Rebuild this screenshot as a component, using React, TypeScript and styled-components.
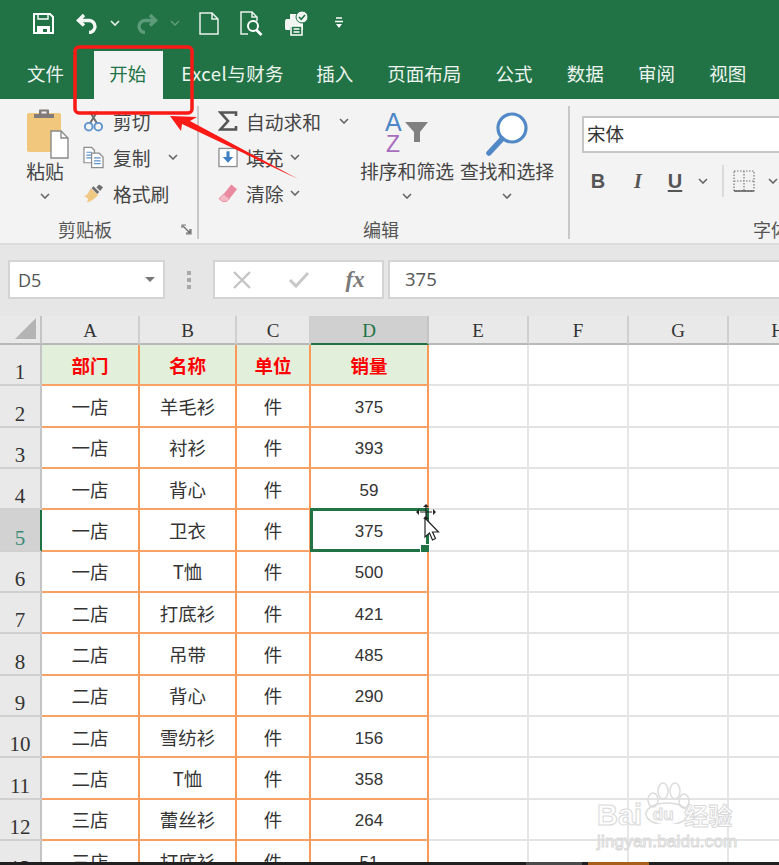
import React from "react";
import styled, { createGlobalStyle } from "styled-components";

const GlobalStyle = createGlobalStyle`
  html, body {
    margin: 0;
    padding: 0;
    background: #fff;
  }
  * {
    box-sizing: border-box;
  }
`;

const CJK = `"Noto Sans CJK SC", "Noto Sans", sans-serif`;

const Page = styled.div`
  position: relative;
  width: 779px;
  height: 865px;
  overflow: hidden;
  display: flex;
  flex-direction: column;
  font-family: ${CJK};
  color: #444;
`;

const TitleBar = styled.div`
  height: 50px;
  flex: none;
  background: #217346;
  display: flex;
  align-items: center;
  padding: 0 0 4px 33px;
`;

const QatItem = styled.div<{ $ml?: number }>`
  display: flex;
  margin-left: ${(p) => p.$ml ?? 0}px;
`;

const TabBar = styled.nav`
  height: 49px;
  flex: none;
  background: #217346;
  display: flex;
  padding-left: 10px;
`;

const Tab = styled.div<{ $active?: boolean; $wide?: boolean }>`
  height: ${(p) => (p.$active ? "48px" : "49px")};
  margin: ${(p) => (p.$active ? "1px 1px 0 13px" : "0")};
  padding: ${(p) =>
    p.$active ? "0 17px 4px 15px" : p.$wide ? "0 15px 3px 17.1px" : "0 17.1px 3px"};
  background: ${(p) => (p.$active ? "#f3f3f3" : "transparent")};
  color: ${(p) => (p.$active ? "#217346" : "#eef5f0")};
  font-size: 18.5px;
  letter-spacing: ${(p) => (p.$wide ? "0.45px" : "0")};
  line-height: 1;
  white-space: nowrap;
  display: flex;
  align-items: center;
`;

const Ribbon = styled.div`
  height: 146px;
  flex: none;
  background: #f3f3f3;
  border-bottom: 2px solid #dcdcdc;
  padding: 7px 0 4px;
  display: flex;
  overflow: hidden;
`;

const Group = styled.section<{ $w: number; $pl: number; $last?: boolean }>`
  width: ${(p) => p.$w}px;
  flex: none;
  padding-left: ${(p) => p.$pl}px;
  border-right: ${(p) => (p.$last ? "none" : "2px solid #c8c8c8")};
  display: flex;
  flex-direction: column;
`;

const GroupBody = styled.div`
  flex: 1;
  display: flex;
  min-height: 0;
`;

const GroupLabel = styled.div<{ $ml: number }>`
  position: relative;
  height: 18px;
  margin: 0 0 1px ${(p) => p.$ml}px;
  line-height: 18px;
  font-size: 18px;
  color: #555;
  white-space: nowrap;
`;

const Launcher = styled.div`
  position: absolute;
  left: 123px;
  top: 4px;
  display: flex;
`;

const BigButton = styled.div<{ $w: number; $ml?: number }>`
  width: ${(p) => p.$w}px;
  margin-left: ${(p) => p.$ml ?? 0}px;
  flex: none;
  display: flex;
  flex-direction: column;
  align-items: center;
`;

const BigIcon = styled.div<{ $shift?: number }>`
  height: 55px;
  margin-left: ${(p) => p.$shift ?? 0}px;
  display: flex;
  align-items: center;
  justify-content: center;
`;

const BigLabel = styled.div`
  height: 20px;
  line-height: 20px;
  font-size: 18.8px;
  white-space: nowrap;
`;

const BigChevron = styled.div`
  height: 29px;
  display: flex;
  align-items: center;
`;

const SmallColumn = styled.div<{ $w: number; $ml?: number }>`
  width: ${(p) => p.$w}px;
  margin: -3px 0 0 ${(p) => p.$ml ?? 0}px;
  flex: none;
`;

const SmallRow = styled.div`
  height: 36px;
  display: flex;
  align-items: center;
  font-size: 18.8px;
  white-space: nowrap;
`;

const SmallIcon = styled.div<{ $w: number; $gap?: number }>`
  width: ${(p) => p.$w}px;
  flex: none;
  display: flex;
  justify-content: center;
  margin-right: ${(p) => p.$gap ?? 9}px;
`;

const RowChevron = styled.div<{ $ml: number }>`
  margin-left: ${(p) => p.$ml}px;
  display: flex;
`;

const FontColumn = styled.div`
  flex: none;
  width: 300px;
`;

const FontInput = styled.div`
  height: 37px;
  margin-top: 10px;
  border: 2px solid #c6c6c6;
  background: #fff;
  padding-left: 3px;
  font-size: 18.5px;
  line-height: 31px;
  color: #333;
`;

const FontTools = styled.div`
  margin-top: 13px;
  height: 30px;
  display: flex;
  align-items: center;
`;

const ToolButton = styled.div<{ $w: number; $font?: string; $italic?: boolean; $underline?: boolean }>`
  width: ${(p) => p.$w}px;
  flex: none;
  display: flex;
  justify-content: center;
  font-family: ${(p) => p.$font ?? `"Liberation Sans", sans-serif`};
  font-weight: 700;
  font-size: 20px;
  line-height: 24px;
  color: #555;
  font-style: ${(p) => (p.$italic ? "italic" : "normal")};
  text-decoration: ${(p) => (p.$underline ? "underline" : "none")};
  text-underline-offset: 2px;
`;

const ToolDivider = styled.div`
  width: 2px;
  height: 32px;
  margin-left: 4px;
  flex: none;
  background: #dadada;
`;

const FormulaBar = styled.div`
  height: 71px;
  flex: none;
  background: #e6e6e6;
  padding: 15px 0 0 8px;
  display: flex;
  align-items: flex-start;
`;

const NameBox = styled.div`
  width: 157px;
  height: 39px;
  flex: none;
  background: #fff;
  border: 2px solid #d4d4d4;
  padding: 0 8px;
  display: flex;
  align-items: center;
  justify-content: space-between;
  font-family: "Open Sans", sans-serif;
  font-size: 18px;
  color: #555;
`;

const Caret = styled.div`
  width: 0;
  height: 0;
  border-left: 5px solid transparent;
  border-right: 5px solid transparent;
  border-top: 5px solid #777;
`;

const Grip = styled.div`
  width: 48px;
  height: 39px;
  flex: none;
  display: flex;
  flex-direction: column;
  align-items: center;
  justify-content: center;
  gap: 3px;
`;

const GripDot = styled.span`
  width: 4px;
  height: 4px;
  background: #a8a8a8;
`;

const FxBox = styled.div`
  width: 171px;
  height: 39px;
  flex: none;
  background: #fff;
  border: 2px solid #d4d4d4;
  display: flex;
  align-items: center;
`;

const FxSlot = styled.div<{ $w: number }>`
  width: ${(p) => p.$w}px;
  flex: none;
  display: flex;
  justify-content: center;
`;

const FxLabel = styled.span`
  font-family: "Liberation Serif", serif;
  font-style: italic;
  font-weight: 700;
  font-size: 23px;
  line-height: 30px;
  color: #7a7a7a;
`;

const ValueBox = styled.div`
  flex: 1;
  height: 39px;
  margin: 0 -4px 0 4px;
  background: #fff;
  border: 2px solid #d4d4d4;
  padding-left: 15px;
  font-family: "Open Sans", sans-serif;
  font-size: 18.5px;
  line-height: 34px;
  color: #555;
`;

const Sheet = styled.div`
  flex: 1;
  min-height: 0;
  overflow: hidden;
  display: grid;
  grid-template-columns: 42px 98px 97px 74px 118px 100px 100px 100px 100px;
  grid-template-rows: 29px;
  grid-auto-rows: 41.33px;
  background: #fff;
`;

const Corner = styled.div`
  background: #e9e9e9;
  border-right: 2px solid #c4c4c4;
  border-bottom: 2px solid #b8b8b8;
  display: flex;
  align-items: flex-end;
  justify-content: flex-end;
  padding: 0 4px 4px 0;
`;

const ColHead = styled.div<{ $selected?: boolean }>`
  background: ${(p) => (p.$selected ? "#d0d0d0" : "#e9e9e9")};
  border-right: 2px solid ${(p) => (p.$selected ? "#c4c4c4" : "#cfcfcf")};
  border-bottom: 2px solid ${(p) => (p.$selected ? "#217346" : "#b8b8b8")};
  color: ${(p) => (p.$selected ? "#217346" : "#333")};
  font-family: "Liberation Serif", serif;
  font-size: 19px;
  line-height: 29px;
  text-align: center;
`;

const RowHead = styled.div<{ $selected?: boolean }>`
  background: ${(p) => (p.$selected ? "#d2d2d2" : "#e9e9e9")};
  border-right: 2px solid ${(p) => (p.$selected ? "#217346" : "#c4c4c4")};
  border-bottom: 2px solid #d0d0d0;
  color: ${(p) => (p.$selected ? "#3d8a78" : "#333")};
  font-family: "Liberation Serif", serif;
  font-size: 21px;
  line-height: 24px;
  display: flex;
  align-items: flex-end;
  justify-content: center;
`;

const Cell = styled.div<{ $head?: boolean }>`
  position: relative;
  background: ${(p) => (p.$head ? "#e2efda" : "#fff")};
  border-right: 2px solid #f79a5a;
  border-bottom: 2px solid #f8a268;
  color: ${(p) => (p.$head ? "#ff0000" : "#333")};
  font-weight: ${(p) => (p.$head ? 700 : 400)};
  font-size: 18.5px;
  display: flex;
  align-items: center;
  justify-content: center;
  white-space: nowrap;
`;

const NumberText = styled.span`
  margin-top: 4px;
  font-family: "Liberation Sans", sans-serif;
  font-size: 17px;
`;

const EmptyCell = styled.div`
  border-right: 2px solid #e6e6e6;
  border-bottom: 2px solid #e3e3e3;
`;

const SelectionBox = styled.div`
  position: absolute;
  inset: -2px -2px -2px -1px;
  border: 3px solid #217346;
`;

const FillHandle = styled.div`
  position: absolute;
  right: -3px;
  bottom: -4px;
  width: 8px;
  height: 8px;
  background: #217346;
  border: 1px solid #fff;
  box-sizing: content-box;
`;

const MoveCursor = styled.div`
  position: absolute;
  left: 103px;
  top: -6px;
  display: flex;
  z-index: 2;
`;

const StatusStrip = styled.div`
  height: 3px;
  flex: none;
  background: #211f1f;
  display: flex;
`;

const StatusSegment = styled.div<{ $w: number; $ml: number; $color: string }>`
  width: ${(p) => p.$w}px;
  margin-left: ${(p) => p.$ml}px;
  background: ${(p) => p.$color};
`;

const Annotation = styled.svg`
  position: absolute;
  left: 0;
  top: 0;
  pointer-events: none;
`;

const Watermark = styled.div`
  position: absolute;
  left: 597px;
  top: 782px;
  width: 142px;
  height: 68px;
  font-family: "Liberation Sans", sans-serif;
  color: rgba(255, 255, 255, 0.85);
  -webkit-text-stroke: 1px #d9d9d9;
`;

const WatermarkPaw = styled.svg`
  position: absolute;
  left: 46px;
  top: 0;
`;

const WatermarkBrand = styled.div`
  position: absolute;
  left: 0;
  top: 17px;
  width: 100%;
  display: flex;
  align-items: center;
  font-size: 29px;
  font-weight: 700;
  line-height: 32px;
`;

const WatermarkDu = styled.span`
  width: 42px;
  text-align: center;
  font-size: 17px;
`;

const WatermarkCn = styled.span`
  font-family: ${CJK};
  font-size: 24px;
`;

const WatermarkUrl = styled.div`
  position: absolute;
  left: 0;
  top: 50px;
  font-size: 17px;
  line-height: 20px;
  letter-spacing: 0.2px;
  white-space: nowrap;
`;

const Chevron = ({ color = "#666", size = 10 }: { color?: string; size?: number }) => (
  <svg width={size} height={6} viewBox="0 0 10 6">
    <path d="M1 1l4 4 4-4" fill="none" stroke={color} strokeWidth="1.6" />
  </svg>
);

const SaveIcon = () => (
  <svg width="21" height="21" viewBox="0 0 21 21">
    <path d="M1 1h16l3 3v16H1z" fill="none" stroke="#fff" strokeWidth="2" />
    <path d="M4 13h13v7h-3v-4h-4v4H4z" fill="#fff" />
    <path d="M5 1v5h10V1" fill="none" stroke="#fff" strokeWidth="1.4" />
  </svg>
);

const UndoIcon = ({ color }: { color: string }) => (
  <svg width="22" height="21" viewBox="0 0 22 21">
    <path
      d="M8 2L2.5 7.5 8 12.5M3 7.5h10a6 6 0 0 1 6 6v0a6 6 0 0 1-6 6"
      fill="none"
      stroke={color}
      strokeWidth="3.4"
    />
  </svg>
);

const NewDocIcon = () => (
  <svg width="20" height="23" viewBox="0 0 20 23">
    <path d="M1 1h12l6 6v15H1z M13 1v6h6" fill="none" stroke="#e8f1ec" strokeWidth="1.5" />
  </svg>
);

const PreviewIcon = () => (
  <svg width="23" height="25" viewBox="0 0 23 25">
    <path d="M8 23H1V1h11l5 5v4 M12 1v5h5" fill="none" stroke="#e8f1ec" strokeWidth="1.5" />
    <circle cx="13" cy="15" r="5" fill="none" stroke="#fff" strokeWidth="2" />
    <path d="M16.5 19l5 5" stroke="#fff" strokeWidth="2.6" />
  </svg>
);

const PrinterIcon = () => (
  <svg width="25" height="25" viewBox="0 0 25 25">
    <path d="M2 8h4V3h8v6h3l2 3v7h-5v-3H6v3H2a2 2 0 0 1-1-2v-7z" fill="#f1f6f3" />
    <rect x="7" y="15" width="11" height="9" fill="#217346" stroke="#fff" strokeWidth="1.5" />
    <path d="M9.5 18h6M9.5 21h6" stroke="#fff" strokeWidth="1.3" />
    <circle cx="18" cy="6" r="6" fill="#f1f6f3" stroke="#217346" />
    <path d="M15 6l2.2 2.3L21 4" fill="none" stroke="#217346" strokeWidth="1.6" />
  </svg>
);

const MoreIcon = () => (
  <svg width="10" height="12" viewBox="0 0 10 12">
    <path d="M2 1h6M1 4.5h8" stroke="#fff" strokeWidth="1.5" />
    <path d="M2 7h6l-3 4z" fill="#fff" />
  </svg>
);

const PasteIcon = () => (
  <svg width="44" height="51" viewBox="0 0 44 51">
    <rect x="1" y="5" width="34" height="39" rx="2" fill="#f0c77c" />
    <path d="M8 10V6h5V2.5a1 1 0 0 1 1-1h8a1 1 0 0 1 1 1V6h5v4z" fill="#807b78" />
    <rect x="15.5" y="3.5" width="5" height="2" fill="#f3f3f3" />
    <path d="M25 23h10l7 7v20H25z" fill="#fff" stroke="#8a8a8a" strokeWidth="1.4" />
    <path d="M35 23v7h7" fill="none" stroke="#8a8a8a" strokeWidth="1.4" />
  </svg>
);

const CutIcon = () => (
  <svg width="22" height="22" viewBox="0 0 22 22">
    <path d="M15 1L7 14M7 1l8 13" stroke="#6b6b6b" strokeWidth="2" />
    <circle cx="6" cy="17" r="4" fill="none" stroke="#5b93cd" strokeWidth="2" />
    <circle cx="16" cy="17" r="4" fill="none" stroke="#5b93cd" strokeWidth="2" />
  </svg>
);

const CopyIcon = () => (
  <svg width="22" height="23" viewBox="0 0 22 23">
    <path d="M1 1h8l3 3v13H1z" fill="#fff" stroke="#8c8c8c" strokeWidth="1.3" />
    <path d="M3.5 6h6M3.5 9h6M3.5 12h6" stroke="#5b93cd" strokeWidth="1.3" />
    <path d="M9 7h8l4 4v11H9z" fill="#fff" stroke="#8c8c8c" strokeWidth="1.3" />
    <path d="M11.5 12h7M11.5 15h7M11.5 18h7" stroke="#5b93cd" strokeWidth="1.3" />
  </svg>
);

const BrushIcon = () => (
  <svg width="22" height="20" viewBox="0 0 22 20">
    <path d="M8 5l8 7-3 3c-3 3-6 4-9 5 1-2 2-4 0-5-1-1-2-1-4-1 4-1 6-4 8-9z" fill="#efc983" />
    <path d="M9 5l6 6 2-2-6-6z" fill="#6f6f6f" />
    <path d="M14 4l3-3 4 3-3 4z" fill="#6f6f6f" />
  </svg>
);

const SigmaIcon = () => (
  <svg width="20" height="20" viewBox="0 0 20 20">
    <path d="M18 5V1.5H2.5L10 10l-7.5 8.5H18V15" fill="none" stroke="#555" strokeWidth="2.6" />
  </svg>
);

const FillIcon = () => (
  <svg width="21" height="21" viewBox="0 0 21 21">
    <rect x="1" y="1" width="19" height="19" fill="#fff" stroke="#8f8f8f" strokeWidth="1.4" />
    <path d="M10.5 4v8" stroke="#3f7fc4" strokeWidth="3.2" />
    <path d="M5 10h11l-5.500 6z" fill="#3f7fc4" />
  </svg>
);

const EraserIcon = () => (
  <svg width="21" height="20" viewBox="0 0 21 20">
    <path d="M14 1l6 5-8 10-6-5z" fill="#e98aa0" />
    <path d="M6 11l6 5-3 3H5l-4-3z" fill="#f3b9c5" stroke="#e98aa0" />
  </svg>
);

const SortIcon = () => (
  <svg width="44" height="41" viewBox="0 0 44 41">
    <text x="0" y="18" fontFamily="Liberation Sans" fontSize="25" fill="#4a86c8">A</text>
    <text x="1" y="39" fontFamily="Liberation Sans" fontSize="23" fill="#a86cbd">Z</text>
    <path d="M20 9h23l-8 10v10h-6V19z" fill="#808080" />
  </svg>
);

const FindIcon = () => (
  <svg width="44" height="46" viewBox="0 0 44 46">
    <circle cx="27" cy="17" r="14" fill="#fff" stroke="#5189c6" strokeWidth="3.2" />
    <path d="M17 28L4 42" stroke="#5189c6" strokeWidth="5.500" strokeLinecap="round" />
  </svg>
);

const BordersIcon = () => (
  <svg width="22" height="22" viewBox="0 0 22 22">
    <path d="M1 1h20v20H1zM11 1v20M1 11h20" fill="none" stroke="#777" strokeWidth="1.2" strokeDasharray="1.5 1.5" />
    <path d="M1 21h20" stroke="#555" strokeWidth="1.4" />
  </svg>
);

const LauncherIcon = () => (
  <svg width="11" height="11" viewBox="0 0 11 11">
    <path d="M10 5V10H5M1 4V1h4" fill="none" stroke="#777" strokeWidth="1.200" />
    <path d="M2 2l7 7M9 5v4H5" fill="none" stroke="#666" strokeWidth="1.200" />
  </svg>
);

const CancelIcon = () => (
  <svg width="20" height="20" viewBox="0 0 20 20">
    <path d="M2 2l16 16M18 2L2 18" stroke="#c4c4c4" strokeWidth="2.4" />
  </svg>
);

const EnterIcon = () => (
  <svg width="22" height="18" viewBox="0 0 22 18">
    <path d="M2 9l6 6L20 2" fill="none" stroke="#c8c8c8" strokeWidth="3" />
  </svg>
);

const SelectAllIcon = () => (
  <svg width="21" height="21" viewBox="0 0 21 21">
    <path d="M21 0v21H0z" fill="#b4b4b4" />
  </svg>
);

const MoveCursorIcon = () => (
  <svg width="28" height="38" viewBox="0 0 28 38">
    <path d="M12 8V2M12 8v6M6 8h12" stroke="#222" strokeWidth="1.200" />
    <path d="M12 0l3 3H9zM2 8l3-3v6zM22 8l-3-3v6z M12 12l3 3H9z" fill="#222" />
    <path d="M11 14v19l4.500-4 3 7 3-1.500-3-6.500h6z" fill="#fff" stroke="#222" strokeWidth="1.200" />
  </svg>
);

const tabs = ["插入", "页面布局", "公式", "数据", "审阅", "视图"];
const columns = ["A", "B", "C", "D", "E", "F", "G", "H"];
const heads = ["部门", "名称", "单位", "销量"];
const rows: [string, string, number][] = [
  ["一店", "羊毛衫", 375],
  ["一店", "衬衫", 393],
  ["一店", "背心", 59],
  ["一店", "卫衣", 375],
  ["一店", "T恤", 500],
  ["二店", "打底衫", 421],
  ["二店", "吊带", 485],
  ["二店", "背心", 290],
  ["二店", "雪纺衫", 156],
  ["二店", "T恤", 358],
  ["三店", "蕾丝衫", 264],
  ["三店", "打底衫", 51],
];

const EmptyCells = () => (
  <>
    <EmptyCell />
    <EmptyCell />
    <EmptyCell />
    <EmptyCell />
  </>
);

const App = () => {
  return (
    <Page>
      <GlobalStyle />
      <TitleBar>
        <QatItem><SaveIcon /></QatItem>
        <QatItem $ml={22}><UndoIcon color="#f4f8f5" /></QatItem>
        <QatItem $ml={12}><Chevron color="#e8f1ec" /></QatItem>
        <QatItem $ml={16}>
          <svg width="22" height="21" viewBox="0 0 22 21">
            <g transform="matrix(-1 0 0 1 22 0)">
              <path
                d="M8 2L2.500 7.500 8 12.500M3 7.500h10a6 6 0 0 1 6 6v0a6 6 0 0 1-6 6"
                fill="none"
                stroke="#5c9a7a"
                strokeWidth="3.400"
              />
            </g>
          </svg>
        </QatItem>
        <QatItem $ml={12}><Chevron color="#5c9a7a" /></QatItem>
        <QatItem $ml={19}><NewDocIcon /></QatItem>
        <QatItem $ml={21}><PreviewIcon /></QatItem>
        <QatItem $ml={21}><PrinterIcon /></QatItem>
        <QatItem $ml={25}><MoreIcon /></QatItem>
      </TitleBar>

      <TabBar>
        <Tab>文件</Tab>
        <Tab $active>开始</Tab>
        <Tab $wide>Excel与财务</Tab>
        {tabs.map((t) => (
          <Tab key={t}>{t}</Tab>
        ))}
      </TabBar>

      <Ribbon>
        <Group $w={199} $pl={24}>
          <GroupBody>
            <BigButton $w={42}>
              <BigIcon $shift={6}><PasteIcon /></BigIcon>
              <BigLabel>粘贴</BigLabel>
              <BigChevron><Chevron /></BigChevron>
            </BigButton>
            <SmallColumn $w={110} $ml={17}>
              <SmallRow>
                <SmallIcon $w={21}><CutIcon /></SmallIcon>
                剪切
              </SmallRow>
              <SmallRow>
                <SmallIcon $w={21}><CopyIcon /></SmallIcon>
                复制
                <RowChevron $ml={17}><Chevron /></RowChevron>
              </SmallRow>
              <SmallRow>
                <SmallIcon $w={21}><BrushIcon /></SmallIcon>
                格式刷
              </SmallRow>
            </SmallColumn>
          </GroupBody>
          <GroupLabel $ml={34}>
            剪贴板
            <Launcher><LauncherIcon /></Launcher>
          </GroupLabel>
        </Group>

        <Group $w={371} $pl={19}>
          <GroupBody>
            <SmallColumn $w={131}>
              <SmallRow>
                <SmallIcon $w={20} $gap={8}><SigmaIcon /></SmallIcon>
                自动求和
                <RowChevron $ml={18}><Chevron /></RowChevron>
              </SmallRow>
              <SmallRow>
                <SmallIcon $w={20} $gap={8}><FillIcon /></SmallIcon>
                填充
                <RowChevron $ml={6}><Chevron /></RowChevron>
              </SmallRow>
              <SmallRow>
                <SmallIcon $w={20} $gap={8}><EraserIcon /></SmallIcon>
                清除
                <RowChevron $ml={6}><Chevron /></RowChevron>
              </SmallRow>
            </SmallColumn>
            <BigButton $w={94} $ml={11}>
              <BigIcon><SortIcon /></BigIcon>
              <BigLabel>排序和筛选</BigLabel>
              <BigChevron><Chevron /></BigChevron>
            </BigButton>
            <BigButton $w={94} $ml={6}>
              <BigIcon><FindIcon /></BigIcon>
              <BigLabel>查找和选择</BigLabel>
              <BigChevron><Chevron /></BigChevron>
            </BigButton>
          </GroupBody>
          <GroupLabel $ml={145}>编辑</GroupLabel>
        </Group>

        <Group $w={402} $pl={12} $last>
          <GroupBody>
            <FontColumn>
              <FontInput>宋体</FontInput>
              <FontTools>
                <ToolButton $w={32}>B</ToolButton>
                <ToolButton $w={48} $font={`"Liberation Serif", serif`} $italic>I</ToolButton>
                <ToolButton $w={26} $underline>U</ToolButton>
                <ToolButton $w={30}><Chevron /></ToolButton>
                <ToolDivider />
                <ToolButton $w={40}><BordersIcon /></ToolButton>
                <ToolButton $w={18}><Chevron /></ToolButton>
              </FontTools>
            </FontColumn>
          </GroupBody>
          <GroupLabel $ml={171}>字体</GroupLabel>
        </Group>
      </Ribbon>

      <FormulaBar>
        <NameBox>
          D5
          <Caret />
        </NameBox>
        <Grip>
          <GripDot />
          <GripDot />
          <GripDot />
        </Grip>
        <FxBox>
          <FxSlot $w={54}><CancelIcon /></FxSlot>
          <FxSlot $w={60}><EnterIcon /></FxSlot>
          <FxSlot $w={52}><FxLabel>fx</FxLabel></FxSlot>
        </FxBox>
        <ValueBox>375</ValueBox>
      </FormulaBar>

      <Sheet>
        <Corner><SelectAllIcon /></Corner>
        {columns.map((c) => (
          <ColHead key={c} $selected={c === "D"}>{c}</ColHead>
        ))}

        <RowHead>1</RowHead>
        {heads.map((h) => (
          <Cell key={h} $head>{h}</Cell>
        ))}
        <EmptyCells />

        {rows.map(([store, name, sales], i) => {
          const selected = i === 3;
          return (
            <React.Fragment key={i}>
              <RowHead $selected={selected}>{i + 2}</RowHead>
              <Cell>{store}</Cell>
              <Cell>{name}</Cell>
              <Cell>件</Cell>
              <Cell>
                <NumberText>{sales}</NumberText>
                {selected && (
                  <>
                    <SelectionBox />
                    <FillHandle />
                    <MoveCursor><MoveCursorIcon /></MoveCursor>
                  </>
                )}
              </Cell>
              <EmptyCells />
            </React.Fragment>
          );
        })}
      </Sheet>

      <StatusStrip>
        <StatusSegment $w={56} $ml={526} $color="#4a4a4a" />
        <StatusSegment $w={61} $ml={6} $color="#a85f1c" />
      </StatusStrip>

      <Watermark>
        <WatermarkPaw width="48" height="42" viewBox="0 0 48 42">
          <ellipse cx="10" cy="18" rx="5" ry="7" fill="none" stroke="#dcdcdc" strokeWidth="1.500" />
          <ellipse cx="20" cy="9" rx="5" ry="8" fill="none" stroke="#dcdcdc" strokeWidth="1.500" />
          <ellipse cx="32" cy="9" rx="5" ry="8" fill="none" stroke="#dcdcdc" strokeWidth="1.500" />
          <ellipse cx="41" cy="19" rx="5" ry="7" fill="none" stroke="#dcdcdc" strokeWidth="1.500" />
          <ellipse cx="24" cy="32" rx="21" ry="11" fill="none" stroke="#dcdcdc" strokeWidth="1.500" />
        </WatermarkPaw>
        <WatermarkBrand>
          Bai
          <WatermarkDu>du</WatermarkDu>
          <WatermarkCn>经验</WatermarkCn>
        </WatermarkBrand>
        <WatermarkUrl>jingyan.baidu.com</WatermarkUrl>
      </Watermark>

      <Annotation width="779" height="865" viewBox="0 0 779 865">
        <rect x="75" y="47" width="117" height="66" rx="4" fill="none" stroke="#fb1a16" strokeWidth="3.500" />
        <path d="M170 116L197 117 190 121 298 179 182 124 181 131z" fill="#fb1a16" />
      </Annotation>
    </Page>
  );
};

export default App;
